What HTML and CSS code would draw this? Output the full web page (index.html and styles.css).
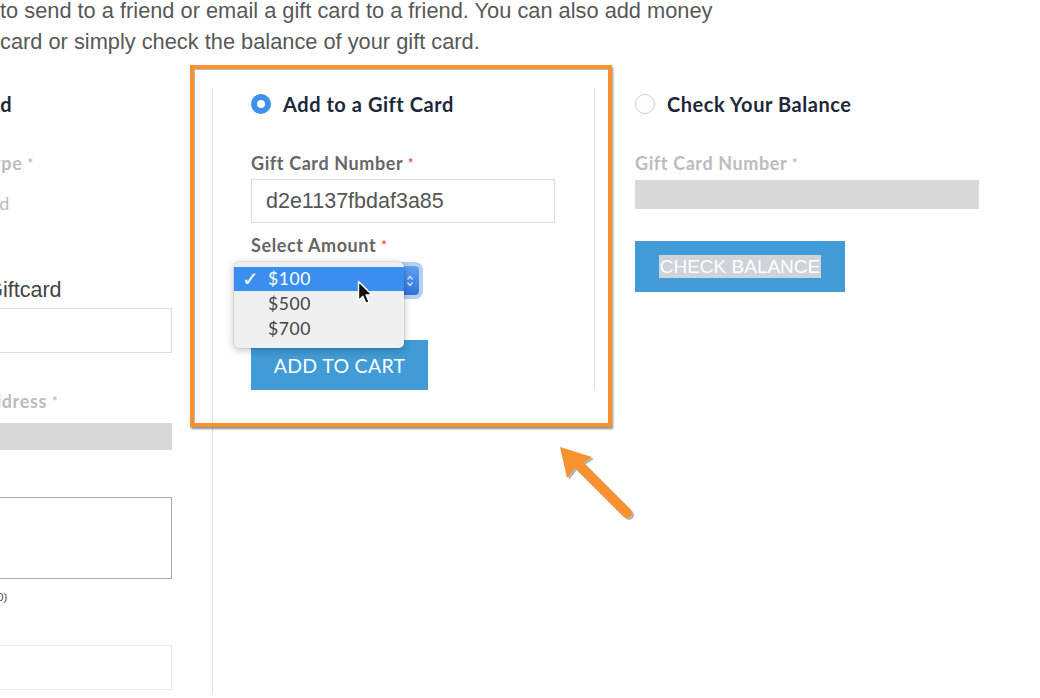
FILE: index.html
```html
<!DOCTYPE html>
<html lang="en">
<head>
  <meta charset="UTF-8">
  <meta name="viewport" content="width=device-width, initial-scale=1.0">
  <title>Gift Cards</title>
  <link rel="stylesheet" href="styles.css">
</head>
<body>
  <div class="page">
    <p class="intro">to send to a friend or email a gift card to a friend. You can also add money<br>card or simply check the balance of your gift card.</p>

    <div class="columns">
      <!-- buy a gift card (cut off on the left) -->
      <section class="col col-buy">
        <div class="option">
          <span class="radio"></span>
          <h3 class="option-title">Send a Card</h3>
        </div>
        <div class="label label-muted">Choose Card Type <i>*</i></div>
        <div class="value-muted">Virtual Gift Card</div>
        <div class="label-plain">Name(s) on Giftcard</div>
        <div class="field"></div>
        <div class="label label-muted label-email">Friend Email Address <i>*</i></div>
        <div class="field field-filled"></div>
        <div class="label label-muted label-msg">Note</div>
        <div class="field field-area"></div>
        <div class="hint">Characters remaining: (250)</div>
        <div class="field field-last"></div>
      </section>

      <!-- add to a gift card -->
      <section class="col col-add">
        <div class="option">
          <span class="radio checked"></span>
          <h3 class="option-title">Add to a Gift Card</h3>
        </div>
        <div class="label">Gift Card Number <i>*</i></div>
        <div class="field field-text">d2e1137fbdaf3a85</div>
        <div class="label label-amount">Select Amount <i>*</i></div>
        <div class="select-wrap">
          <div class="select">
            <span class="select-arrows">
              <svg width="8" height="14" viewBox="0 0 8 14">
                <path d="M1.5 5.5l2.5-3 2.5 3M1.5 8.5l2.5 3 2.5-3" fill="none" stroke="#dce8fb" stroke-width="1.3"/>
              </svg>
            </span>
          </div>
          <ul class="menu">
            <li class="active"><span class="tick">&#10003;</span>$100</li>
            <li>$500</li>
            <li>$700</li>
          </ul>
          <svg class="cursor" width="16" height="26" viewBox="0 0 16 26">
            <path d="M1.5 1.5v19l4.4-4.3 3 7.2 3.2-1.4-3-7h6z" fill="#111" stroke="#fff" stroke-width="1.4" stroke-linejoin="round"/>
          </svg>
        </div>
        <button class="btn btn-add">ADD TO CART</button>
      </section>

      <!-- check balance -->
      <section class="col col-check">
        <div class="option">
          <span class="radio"></span>
          <h3 class="option-title">Check Your Balance</h3>
        </div>
        <div class="label label-muted">Gift Card Number <i>*</i></div>
        <div class="field field-filled field-balance"></div>
        <button class="btn btn-check"><span class="selected">CHECK BALANCE</span></button>
      </section>
    </div>

    <!-- annotation -->
    <div class="highlight"></div>
    <svg class="arrow" width="100" height="100" viewBox="0 0 100 100">
      <g transform="translate(2 2)" fill="#777" opacity="0.55">
        <line x1="77" y1="78" x2="26" y2="27" stroke="#777" stroke-width="10" stroke-linecap="round"/>
        <polygon points="10,12 17,43 25,33 42,22"/>
      </g>
      <line x1="77" y1="78" x2="26" y2="27" stroke="#f7922f" stroke-width="10" stroke-linecap="round"/>
      <polygon points="10,12 17,43 25,33 42,22" fill="#f7922f"/>
    </svg>
  </div>
</body>
</html>
```

FILE: styles.css
```css
html, body {
  margin: 0;
  padding: 0;
  background: #fff;
  overflow: hidden;
}
.page {
  position: relative;
  height: 698px;
  font-family: "Lato", "Liberation Sans", sans-serif;
}

/* intro text */
.intro {
  margin: -5px 0 0 0;
  font-family: "Liberation Sans", Arial, sans-serif;
  font-size: 21.8px;
  line-height: 31px;
  color: #585858;
}

/* columns */
.columns {
  display: flex;
  align-items: flex-start;
  margin-top: 31px;
}
.col {
  display: flex;
  flex-direction: column;
  align-items: flex-start;
}
.col-buy {
  width: 304px;
  margin-left: -132px;
  padding-right: 40px;
  padding-bottom: 40px;
  border-right: 1px solid #e2e2e2;
}
.col-add {
  width: 304px;
  padding: 0 39px 0 38px;
  border-right: 1px solid #e2e2e2;
}
.col-check {
  width: 344px;
  padding-left: 40px;
}

/* option header */
.option {
  display: flex;
  align-items: center;
  gap: 12px;
  height: 31px;
}
.radio {
  width: 20px;
  height: 20px;
  box-sizing: border-box;
  border-radius: 50%;
  border: 1.5px solid #cfcfcf;
  background: #fff;
}
.radio.checked {
  border: 6.5px solid #3d8ff0;
  background: #fff;
}
.option-title {
  margin: 0;
  font-size: 20px;
  font-weight: 700;
  letter-spacing: 0.55px;
  color: #1c2839;
}

/* labels and fields */
.label {
  margin-top: 34px;
  font-size: 18px;
  font-weight: 700;
  letter-spacing: 0.6px;
  line-height: 20px;
  color: #666;
}
.label i {
  font-style: normal;
  font-size: 13px;
  color: #e4572e;
  vertical-align: top;
}
.label-muted {
  color: #bcbcbc;
}
.label-muted i {
  color: #bcbcbc;
}
.label-amount {
  margin-top: 12px;
}
.value-muted {
  margin-top: 20px;
  font-size: 18px;
  letter-spacing: 0.75px;
  line-height: 20px;
  color: #bcbcbc;
}
.label-plain {
  margin-top: 66px;
  font-family: "Liberation Sans", Arial, sans-serif;
  font-size: 21.5px;
  line-height: 23px;
  color: #444;
}
.label-email {
  margin-top: 38px;
}
.label-msg {
  margin-top: 20px;
}
.field {
  box-sizing: border-box;
  align-self: stretch;
  height: 45px;
  margin-top: 6px;
  border: 1px solid #dcdcdc;
  background: #fff;
}
.field-text {
  height: 44px;
  padding-left: 14px;
  font-family: "Liberation Sans", Arial, sans-serif;
  font-size: 21.5px;
  line-height: 42px;
  color: #555;
}
.field-filled {
  height: 27px;
  margin-top: 12px;
  border: none;
  background: #d9d9d9;
}
.field-area {
  height: 82px;
  margin-top: 7px;
  border-color: #a9a9a9;
}
.field-balance {
  height: 29px;
  margin-top: 7px;
}
.hint {
  margin-top: 12px;
  font-family: "Liberation Sans", Arial, sans-serif;
  font-size: 11.2px;
  color: #444;
}
.field-last {
  margin-top: 42px;
  border-color: #e8e8e8;
}

/* select with open menu */
.select-wrap {
  position: relative;
  margin-top: 10px;
  width: 169px;
  height: 31px;
}
.select {
  height: 31px;
  border-radius: 5px;
  background: #fff;
  border: 1px solid #cfcfcf;
  box-sizing: border-box;
  box-shadow: 0 0 0 3px rgba(80, 150, 240, 0.45);
  overflow: hidden;
  display: flex;
  justify-content: flex-end;
}
.select-arrows {
  width: 18px;
  display: flex;
  align-items: center;
  justify-content: center;
  background: linear-gradient(#5ea0f2, #2e74e0);
}
.menu {
  position: absolute;
  left: -17px;
  top: -3px;
  width: 170px;
  margin: 0;
  padding: 5px 0 7px;
  list-style: none;
  background: #efefef;
  border-radius: 5px;
  box-shadow: 0 2px 8px rgba(0, 0, 0, 0.25), 0 0 0 1px rgba(0, 0, 0, 0.06);
}
.menu li {
  height: 25px;
  padding-left: 34px;
  position: relative;
  font-size: 17.5px;
  letter-spacing: 0.6px;
  line-height: 25px;
  color: #444;
}
.menu li.active {
  height: 24px;
  line-height: 24px;
  background: #3a8ef0;
  color: #fff;
}
.tick {
  position: absolute;
  left: 8px;
  font-family: "DejaVu Sans", sans-serif;
  font-size: 20px;
  font-weight: 700;
}
.cursor {
  position: absolute;
  left: 106px;
  top: 15px;
}

/* buttons */
.btn {
  border: none;
  margin: 0;
  padding: 0;
  color: #fff;
  background: #409bd6;
  cursor: pointer;
}
.btn-add {
  margin-top: 44px;
  width: 177px;
  height: 50px;
  font-family: "Lato", sans-serif;
  font-size: 19.5px;
  letter-spacing: 0.3px;
}
.btn-check {
  margin-top: 32px;
  width: 210px;
  height: 51px;
  font-family: "Liberation Sans", Arial, sans-serif;
  font-size: 19px;
}
.selected {
  background: #cdd3d8;
  padding: 0 1px;
  line-height: 23px;
  display: inline-block;
}

/* orange annotation */
.highlight {
  position: absolute;
  left: 190px;
  top: 70px;
  width: 422px;
  height: 362px;
  box-sizing: border-box;
  border: 4px solid #f7922f;
  box-shadow: 1px 2px 2px rgba(0, 0, 0, 0.45), inset 1px 1px 1px rgba(0, 0, 0, 0.3);
}
.arrow {
  position: absolute;
  left: 550px;
  top: 440px;
}
```
